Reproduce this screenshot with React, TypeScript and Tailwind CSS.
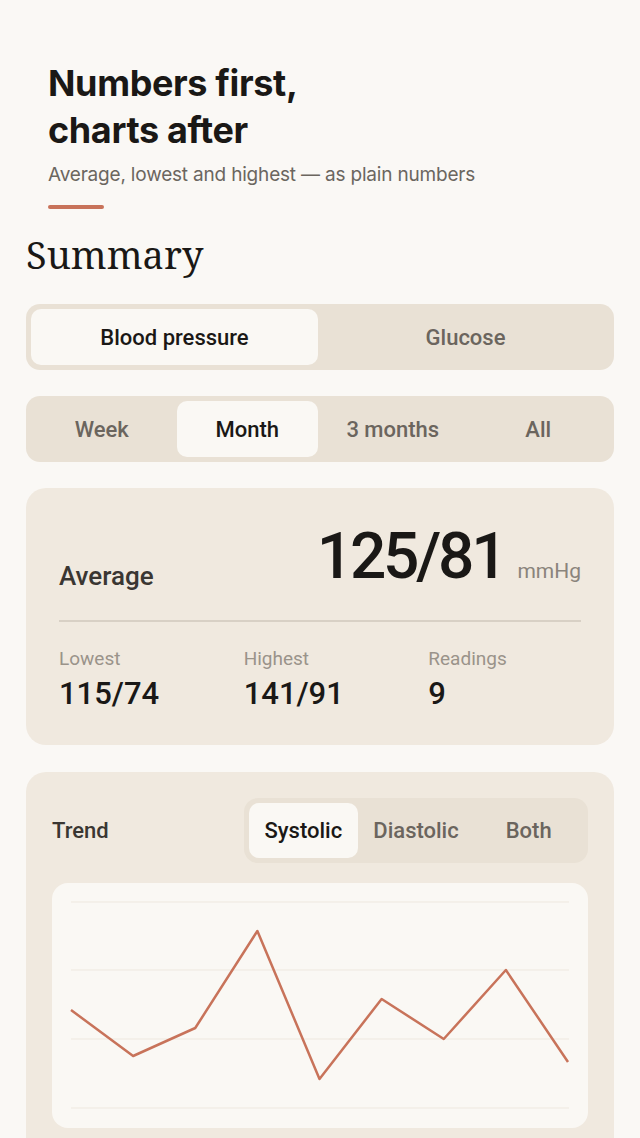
import { useState } from "react";

const points = [1010, 1056, 1028, 931, 1079, 999, 1039, 970, 1062];

function Segmented({ options, active, onPick, className = "" }: { options: string[]; active: string; onPick: (v: string) => void; className?: string }) {
  return (
    <div className={`flex gap-1 rounded-[14px] bg-[#e9e1d5] p-[5px] ${className}`}>
      {options.map((opt) => (
        <button
          key={opt}
          type="button"
          onClick={() => onPick(opt)}
          className={`flex-1 rounded-[10px] text-[22px] font-medium ${opt === active ? "bg-[#faf8f4] text-[#1a1816]" : "text-[#6b655e]"}`}
        >
          {opt}
        </button>
      ))}
    </div>
  );
}

function TrendChart() {
  const w = 536;
  const x0 = 19;
  const step = (568 - 71) / (points.length - 1);
  const d = points.map((y, i) => `${i === 0 ? "M" : "L"}${x0 + i * step} ${y - 883}`).join(" ");
  return (
    <div className="mt-5 h-[245px] rounded-2xl bg-[#faf8f4]">
      <svg width={w} height={245} viewBox={`0 0 ${w} 245`}>
        {[19, 87, 156, 225].map((y) => (
          <line key={y} x1={19} x2={517} y1={y} y2={y} stroke="#eee8df" strokeWidth={1} />
        ))}
        <path d={d} fill="none" stroke="#c8735a" strokeWidth={2.5} strokeLinejoin="round" />
      </svg>
    </div>
  );
}

export default function App() {
  const [metric, setMetric] = useState("Blood pressure");
  const [range, setRange] = useState("Month");
  const [series, setSeries] = useState("Systolic");

  return (
    <div className="min-h-[1138px] bg-[#faf8f5] px-[26px] pt-[60px] font-['Roboto',sans-serif]">
      <header className="px-[22px]">
        <h1 className="font-['Inter',sans-serif] text-[36px] font-bold leading-[47px] tracking-[-0.01em] text-[#1a1816]">
          Numbers first,
          <br />
          charts after
        </h1>
        <p className="mt-[7px] font-['Inter',sans-serif] text-[19px] leading-[28px] tracking-[-0.01em] text-[#6b665f]">Average, lowest and highest — as plain numbers</p>
        <div className="mt-[16px] h-1 w-14 rounded-full bg-[#c8735a]" />
      </header>

      <h2 className="mt-[19px] font-['Noto_Serif','DejaVu_Serif',serif] text-[38px] leading-[52px] text-[#1a1816]">Summary</h2>

      <Segmented className="mt-[24px] h-[66px]" options={["Blood pressure", "Glucose"]} active={metric} onPick={setMetric} />
      <Segmented className="mt-[26px] h-[66px]" options={["Week", "Month", "3 months", "All"]} active={range} onPick={setRange} />

      <section className="mt-[26px] rounded-[20px] bg-[#f0e9df] px-[33px] pb-[33px] pt-[37px]">
        <div className="flex items-end justify-between border-b-2 border-[#d8d0c5] pb-[31px]">
          <span className="text-[26px] font-medium leading-[26px] text-[#3a3632]">Average</span>
          <div className="flex items-baseline gap-[13px]">
            <span className="text-[64px] font-medium leading-none tracking-[-0.05em] text-[#1a1816]">125/81</span>
            <span className="text-[21px] text-[#8a847c]">mmHg</span>
          </div>
        </div>
        <div className="mt-[24px] grid grid-cols-3 gap-8">
          {[
            ["Lowest", "115/74"],
            ["Highest", "141/91"],
            ["Readings", "9"],
          ].map(([label, value]) => (
            <div key={label}>
              <div className="text-[19px] leading-[26px] text-[#9a938a]">{label}</div>
              <div className="mt-[4px] text-[31px] font-medium leading-9 text-[#1a1816]">{value}</div>
            </div>
          ))}
        </div>
      </section>

      <section className="mt-[27px] rounded-t-[20px] bg-[#f0e9df] px-[26px] pb-6 pt-[26px]">
        <div className="flex items-center justify-between">
          <span className="text-[22px] font-medium text-[#3a3632]">Trend</span>
          <Segmented className="h-[65px] w-[344px]" options={["Systolic", "Diastolic", "Both"]} active={series} onPick={setSeries} />
        </div>
        <TrendChart />
      </section>
    </div>
  );
}
